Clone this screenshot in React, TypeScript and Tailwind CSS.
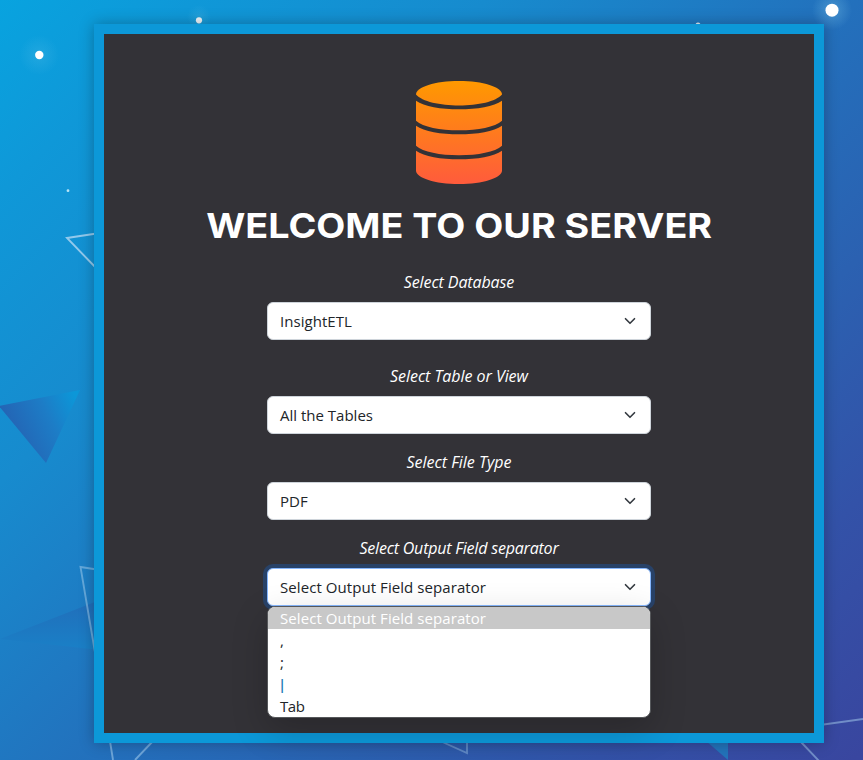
import type { ReactNode } from 'react';

const fontStack = "font-['Open_Sans','Noto_Sans',sans-serif]";

function Backdrop() {
  return (
    <svg className="absolute inset-0 h-full w-full" viewBox="0 0 863 760" aria-hidden="true">
      <defs>
        <linearGradient id="sky" gradientUnits="userSpaceOnUse" x1="0" y1="0" x2="805" y2="810">
          <stop offset="0" stopColor="#08a3df" />
          <stop offset="0.12" stopColor="#0f98d8" />
          <stop offset="0.3" stopColor="#178bce" />
          <stop offset="0.38" stopColor="#1b82c8" />
          <stop offset="0.53" stopColor="#2370bc" />
          <stop offset="0.69" stopColor="#2b61b1" />
          <stop offset="0.84" stopColor="#3352a8" />
          <stop offset="1" stopColor="#39469f" />
        </linearGradient>
        <linearGradient id="shard" gradientUnits="userSpaceOnUse" x1="10" y1="430" x2="76" y2="398">
          <stop offset="0" stopColor="#2464b4" />
          <stop offset="0.55" stopColor="#1d7cc6" />
          <stop offset="1" stopColor="#0c97d8" />
        </linearGradient>
        <linearGradient id="sliver" x1="0" y1="0" x2="0" y2="1">
          <stop offset="0" stopColor="#216eba" />
          <stop offset="1" stopColor="#1a80c7" />
        </linearGradient>
        <radialGradient id="halo">
          <stop offset="0" stopColor="#8bd2ef" stopOpacity=".5" />
          <stop offset="1" stopColor="#8bd2ef" stopOpacity="0" />
        </radialGradient>
      </defs>
      <rect width="863" height="760" fill="url(#sky)" />
      <path d="M-1 406 L80 390 L46 463Z" fill="url(#shard)" />
      <path d="M0 639 L100 600 V650Z" fill="url(#sliver)" />
      <path d="M706 741 H728 V760Z" fill="#2373ba" />
      <g fill="none" stroke="#a9d2f0" strokeWidth="1.9">
        <path d="M100 233 L67 238 L100 272" opacity=".85" />
        <path d="M100 570 L80.5 567 L98 670" opacity=".5" />
        <path d="M109 735 L113 760 M154 740 L135 760" opacity=".55" />
        <path d="M438 740 L467 753 V740" opacity=".4" />
        <path d="M800 741 L820 762 M820 725 L863 719" opacity=".5" />
      </g>
      <circle cx="39" cy="55" r="20" fill="url(#halo)" opacity=".35" />
      <circle cx="39.3" cy="55" r="4.2" fill="white" />
      <circle cx="199" cy="17" r="12" fill="url(#halo)" opacity=".3" />
      <circle cx="199" cy="20.3" r="3.1" fill="#eef5fa" />
      <circle cx="68" cy="190.7" r="1.4" fill="#b8e4f6" />
      <circle cx="698" cy="25" r="2.5" fill="#e4eef7" />
      <circle cx="832" cy="10" r="20" fill="url(#halo)" opacity=".7" />
      <circle cx="832" cy="10.2" r="6.5" fill="white" />
    </svg>
  );
}

function DatabaseIcon() {
  return (
    <svg className="block h-[103px] w-[86px]" viewBox="0 0 86 103" aria-hidden="true">
      <defs>
        <linearGradient id="flame" gradientUnits="userSpaceOnUse" x1="0" y1="0" x2="0" y2="103">
          <stop offset="0" stopColor="#ff9900" />
          <stop offset="1" stopColor="#ff5b3c" />
        </linearGradient>
      </defs>
      <g fill="url(#flame)">
        <path d="M0 13.5 C0 6 19 0 43 0 S86 6 86 13.5 C80 20.5 62 24.5 43 24.5 S6 20.5 0 13.5Z" />
        <path d="M0 19.7 C8 25.5 25 28.3 43 28.3 S78 25.5 86 19.7 V39.7 C79 46 62 49.3 43 49.3 S7 46 0 39.7Z" />
        <path d="M0 44.7 C8 50.5 25 53.3 43 53.3 S78 50.5 86 44.7 V64.7 C79 71 62 74.2 43 74.2 S7 71 0 64.7Z" />
        <path d="M0 69.7 C8 75.5 25 78.3 43 78.3 S78 75.5 86 69.7 V89.5 C86 97 67 103 43 103 S0 97 0 89.5Z" />
      </g>
    </svg>
  );
}

function Label({ children, tracking }: { children: ReactNode; tracking: string }) {
  return <div className={`h-6 text-center text-[16px] leading-6 italic whitespace-nowrap text-white ${tracking}`}>{children}</div>;
}

function SelectBox({ value, tracking, open = false }: { value: string; tracking: string; open?: boolean }) {
  return (
    <div
      className={`flex h-[38px] w-full items-center justify-between rounded-md border bg-white pr-3 pl-3 text-[#212529] ${
        open ? 'border-[#86b7fe] ring-4 ring-[#284268]' : 'border-[#ced4da]'
      }`}
    >
      <span className={`text-[15px] leading-6 whitespace-nowrap ${tracking}`}>{value}</span>
      <svg className="h-3 w-4" viewBox="0 0 16 16" fill="none" stroke="#343a40" strokeWidth="2.2" strokeLinecap="round" strokeLinejoin="round" aria-hidden="true">
        <path d="m2 5 6 6 6-6" />
      </svg>
    </div>
  );
}

export default function App() {
  return (
    <div className={`relative h-[760px] w-[863px] overflow-hidden ${fontStack}`}>
      <Backdrop />
      <main className="relative mt-6 ml-[94px] flex h-[719px] w-[730px] flex-col items-center border-10 border-[#0c98d8] bg-[#333237] pt-[47px] shadow-[0_0_14px_rgba(0,0,0,0.28)]">
        <DatabaseIcon />
        <h1 className="mt-5 flex h-11 origin-center scale-x-[1.109] items-center font-[Inter] text-[34px] leading-none font-bold whitespace-nowrap text-white">
          WELCOME TO OUR SERVER
        </h1>
        <div className="mt-[22px] flex w-96 flex-col">
          <Label tracking="tracking-[-0.1px]">Select Database</Label>
          <div className="mt-2 mb-6">
            <SelectBox value="InsightETL" tracking="tracking-[0.05px]" />
          </div>
          <Label tracking="tracking-[-0.05px]">Select Table or View</Label>
          <div className="mt-2 mb-4">
            <SelectBox value="All the Tables" tracking="tracking-normal" />
          </div>
          <Label tracking="tracking-normal">Select File Type</Label>
          <div className="mt-2 mb-4">
            <SelectBox value="PDF" tracking="tracking-normal" />
          </div>
          <Label tracking="tracking-[-0.2px]">Select Output Field separator</Label>
          <div className="relative mt-2">
            <SelectBox value="Select Output Field separator" tracking="tracking-[0.07px]" open />
            <ul className="absolute top-[38px] left-0 w-full overflow-hidden rounded-lg border border-[#55575a] bg-white text-[15px] leading-[22px] tracking-[0.07px] text-[#212529] shadow-[0_12px_36px_0px_rgba(0,0,0,0.2)]">
              <li className="bg-[#c8c8c8] pl-3 text-white">Select Output Field separator</li>
              <li className="pl-3">,</li>
              <li className="pl-3">;</li>
              <li className="pl-3 -indent-[2px] font-semibold text-[#1d78b5]">|</li>
              <li className="pl-3 tracking-[-0.4px]">Tab</li>
            </ul>
          </div>
        </div>
      </main>
    </div>
  );
}
